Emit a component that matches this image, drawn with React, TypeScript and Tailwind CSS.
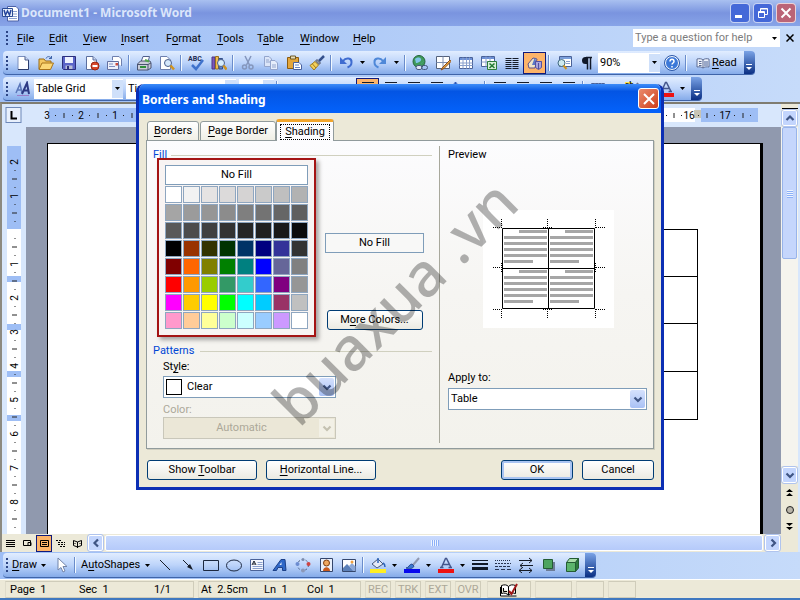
import type { ReactNode } from "react";

const Svg = ({ children, w = 16 }: { children: ReactNode; w?: number }) => (
  <svg width={w} height="16" viewBox={`0 0 ${w} 16`} fill="none" aria-hidden="true">
    {children}
  </svg>
);

const page = "M3 1.5h7l3.500 3.500v9.500H3z";

const icons: Record<string, ReactNode> = {
  newDoc: (
    <Svg>
      <path d={page} fill="#fff" stroke="#7a8fbf" />
      <path d="M13.500 5v9.500H3" stroke="#2c3c6c" />
      <path d="M10 1.500V5h3.500" fill="#c9d6f2" stroke="#4a5c8c" />
    </Svg>
  ),
  open: (
    <Svg>
      <path d="M1 14V4h5l1.500 2H13v3" fill="#f4c860" stroke="#9a6b14" />
      <path d="M1 14.500 4 8h11.500l-3 6.500z" fill="#fbd876" stroke="#a8741a" />
      <path d="M8 3.500c1-2.500 4-2.500 5.500 0m0 0V1m0 2.500H11" stroke="#3c62a8" />
    </Svg>
  ),
  save: (
    <Svg>
      <path d="M1.500 1.500h13v13h-12l-1-1z" fill="#5a64c8" stroke="#2c2f7c" />
      <path d="M4 2h8v6H4z" fill="#eef2ff" />
      <path d="M4.500 10.500h7V14h-7z" fill="#b9bfd6" />
      <path d="M6 11h2v3H6z" fill="#2c2f7c" />
    </Svg>
  ),
  permission: (
    <Svg>
      <path d="M2.500 1.500H9l3.500 3.500v9.500h-10z" fill="#fff" stroke="#5b6f9f" />
      <path d="M9 1.500V5h3.500" fill="#c9d6f2" stroke="#5b6f9f" />
      <circle cx="11" cy="11" r="4" fill="#d8482c" stroke="#9a2410" />
      <path d="M8.500 11h5" stroke="#fff" strokeWidth="2" />
    </Svg>
  ),
  mail: (
    <Svg>
      <path d="M5.500 5V1.500H12l2.500 2.500v7" fill="#fff" stroke="#6d7fae" />
      <path d="M.500 6.500h11v8H.500z" fill="#eef1fb" stroke="#6470a0" />
      <path d="M2 9h4M2 11.500h6" stroke="#7f8fc0" />
      <path d="M8.500 8H11v2.500H8.500z" fill="#cc4a3c" />
    </Svg>
  ),
  print: (
    <Svg>
      <path d="M5 7 7 1.500h6.500L12 7" fill="#fff" stroke="#50608c" />
      <path d="m1.500 9 3-3H14l1 2v5l-3 2H1.500z" fill="#c9cdd8" stroke="#4a5370" />
      <path d="M1.500 9.500h10.500L15 8M12 9.500V15" stroke="#4a5370" />
      <path d="M4 12h6" stroke="#2f8f3a" strokeWidth="2" />
      <path d="m9 5 4 1.500" stroke="#54a84c" strokeWidth="2" />
    </Svg>
  ),
  preview: (
    <Svg>
      <path d="M1.500 1.500H8l3.500 3.500v9.500h-10z" fill="#fff" stroke="#6d7fae" />
      <circle cx="9" cy="8" r="3.500" fill="#d6e8fb" stroke="#4a5f8c" />
      <path d="m11.500 10.500 3.500 4" stroke="#d09420" strokeWidth="2.500" />
    </Svg>
  ),
  spelling: (
    <Svg w={18}>
      <text x="1" y="6" fontSize="7" fontWeight="bold" fill="#1c2c54">ABC</text>
      <path d="m5 10 4 4 7-9" stroke="#3f72cc" strokeWidth="2.500" />
    </Svg>
  ),
  research: (
    <Svg>
      <path d="M1 2h3v12H1z" fill="#7c58b8" stroke="#4b3488" />
      <path d="M4.500 1.500h3V14h-3z" fill="#f0bc50" stroke="#98701c" />
      <path d="M8 3.500h3.500V14H8z" fill="#5c86d0" stroke="#34508c" />
      <circle cx="10" cy="8" r="3.500" fill="#d6ecfb" stroke="#4a5f8c" />
      <path d="m12.500 10.500 3 4" stroke="#d09420" strokeWidth="2.500" />
    </Svg>
  ),
  cut: (
    <Svg>
      <path d="m5 1 4.500 9M11 1l-4.500 9" stroke="#8496bc" strokeWidth="1.500" />
      <circle cx="4.500" cy="12" r="2" stroke="#8496bc" strokeWidth="1.500" />
      <circle cx="11" cy="12" r="2" stroke="#8496bc" strokeWidth="1.500" />
    </Svg>
  ),
  copy: (
    <Svg>
      <path d="M1.500 1.500H6L8.500 4v7.500h-7z" fill="#dbe5f8" stroke="#93a5cc" />
      <path d="M7.500 5.500H12l2.500 2.500v6.500h-7z" fill="#e6eefb" stroke="#93a5cc" />
      <path d="M3 5h3M3 7h4M9 10h4M9 12h4" stroke="#93a5cc" />
    </Svg>
  ),
  paste: (
    <Svg>
      <path d="M1.500 2.500h11v11h-11z" fill="#e4a63c" stroke="#8c5c10" />
      <path d="M4.500 1h5v3h-5z" fill="#e8dcb8" stroke="#6c5a28" />
      <path d="M7.500 7.500H13L15.500 10v4.500h-8z" fill="#fff" stroke="#4a62a0" />
      <path d="M9 10h4M9 12.500h5" stroke="#6a85c4" />
    </Svg>
  ),
  painter: (
    <Svg>
      <path d="m15 1-5 5" stroke="#34508c" strokeWidth="2.500" />
      <path d="M8 4.500 11.500 8l-1.500 1.500L6.500 6z" fill="#9098a8" stroke="#505870" />
      <path d="M6 6.500 9.500 10 5 15l-4-4.500z" fill="#f3d05c" stroke="#a07c1c" />
      <path d="m3.500 9 3.500 4" stroke="#a07c1c" />
    </Svg>
  ),
  undo: (
    <Svg>
      <path d="M5 6c3-4 9-3 8.500 1.500 0 2.500-1.500 4-4 5" stroke="#3f6cd0" strokeWidth="2" />
      <path d="M2 2v7h7z" fill="#3f6cd0" />
    </Svg>
  ),
  redo: (
    <Svg>
      <path d="M11 6C8 2 2 3 2.500 7.500c0 2.500 1.500 4 4 5" stroke="#4f88d8" strokeWidth="2" />
      <path d="M14 2v7H7z" fill="#4f88d8" />
    </Svg>
  ),
  hyperlink: (
    <Svg>
      <circle cx="7" cy="6.500" r="6" fill="#3f9a5c" stroke="#24643c" />
      <path d="M3 4c2-2 5-2 6 0S6 8 4 8M9 9c1-2 3-2 3-3" fill="#7fc4e8" />
      <rect x="4" y="10.500" width="6" height="4" rx="2" fill="#dfe6f4" stroke="#46587c" />
      <rect x="9.500" y="10.500" width="6" height="4" rx="2" stroke="#46587c" />
    </Svg>
  ),
  borders: (
    <Svg>
      <path d="M1.500 1.500h13v12h-13z" fill="#fff" stroke="#54627c" />
      <path d="M1.500 7.500h13M8 1.500v12" stroke="#8090b0" />
      <path d="m15 5-7 7-2 3 3-1.500 7-7z" fill="#e8a840" stroke="#8c4c1c" />
    </Svg>
  ),
  table: (
    <Svg>
      <path d="M1.500 2.500h13v11h-13z" fill="#fff" stroke="#4a6298" />
      <path d="M2 3h12v2H2z" fill="#6c90d8" />
      <path d="M1.500 8h13M1.500 10.500h13M5 2.500v11M8.500 2.500v11M11.500 2.500v11" stroke="#8aa0cc" />
    </Svg>
  ),
  excel: (
    <Svg>
      <path d="M.500 1.500h13v10H.500z" fill="#fff" stroke="#4a6298" />
      <path d="M1 2h12v2H1z" fill="#6c90d8" />
      <path d="M.500 7h13M5 1.500v10M9 1.500v10" stroke="#8aa0cc" />
      <path d="M6.500 6.500h9v8h-9z" fill="#d8efd8" stroke="#2c7c3c" />
      <path d="m8.500 8.500 5 4.500m0-4.500-5 4.500" stroke="#1f7a30" strokeWidth="1.500" />
    </Svg>
  ),
  columns: (
    <Svg>
      <path d="M1.500 3.500h6m1 0h6m-13 2h6m1 0h6m-13 2h6m1 0h6m-13 2h6m1 0h6m-13 2h6m1 0h6m-13 2h6m1 0h6" stroke="#161c28" />
    </Svg>
  ),
  drawing: (
    <Svg>
      <path d="M1 9 6 3l4 1-2 9H2z" fill="#f0e6c8" stroke="#605088" />
      <path d="M5 10 8 2l2 8z" fill="#5a78c8" />
      <path d="M8.500 6.500h6v6l-3 2-3-2z" fill="#a8a4dc" stroke="#5450a0" />
      <path d="M8.500 6.500h6M11.500 8v6" stroke="#5450a0" />
    </Svg>
  ),
  docMap: (
    <Svg>
      <path d="M3.500 1.500h12v10h-12z" fill="#fff" stroke="#4a6298" />
      <path d="M4 2h11v2H4z" fill="#7ba0dc" />
      <path d="M10 6.500h4m-4 2h4" stroke="#8aa0cc" />
      <circle cx="5.500" cy="8" r="3.500" fill="#cfeaf0" stroke="#3f6880" />
      <path d="m7.500 10.500 3 3.500" stroke="#d09420" strokeWidth="2" />
    </Svg>
  ),
  pilcrow: (
    <Svg>
      <path d="M8.500 2.500v12m3-12v12M13 2.500H7" stroke="#101828" strokeWidth="1.500" />
      <path d="M8.500 2h-2a3.500 3.500 0 0 0 0 7h2z" fill="#101828" />
    </Svg>
  ),
  help: (
    <Svg>
      <circle cx="8" cy="8" r="6.500" fill="#3c78d8" stroke="#fff" />
      <circle cx="8" cy="8" r="7.500" stroke="#2c58a8" />
      <path d="M6 6.500c0-3 4-3 4 0C10 8 8 8 8 9.500M8 11v1.500" stroke="#fff" strokeWidth="1.500" />
    </Svg>
  ),
  book: (
    <Svg>
      <path d="M2 4c2.500-.500 4.500-.500 6 1 1.500-1.500 3.500-1.500 6-1v8c-2.500-.500-4.500 0-6 1-1.500-1-3.500-1.500-6-1z" fill="#eef2fb" stroke="#5c6c94" />
      <path d="M8 5v8M4 6.500h2.500M4 8.500h2.500M4 10.500h2.500" stroke="#5c6c94" />
      <path d="M9 6h4v5.500H9z" fill="#9aa8c8" />
    </Svg>
  ),
  styles: (
    <Svg>
      <path d="m1 12 4-9 2 9M2.500 9H7" stroke="#5a76b8" strokeWidth="1.500" />
      <path d="m7 13 5-11 2 11M8.500 9.500H14" stroke="#2c3a84" strokeWidth="2" />
      <path d="M2 14.500h12" stroke="#9a7cc8" />
    </Svg>
  ),
  alignLines: (
    <Svg>
      <path d="M2 1.500h12M2 4.500h8M2 7.500h12M2 10.500h8M2 13.500h12" stroke="#161c28" />
    </Svg>
  ),
  spacing: (
    <Svg>
      <path d="M3.500 1v14M1 4l2.500-3L6 4M1 12l2.500 3L6 12" stroke="#2c58b8" />
      <path d="M8 4.500h7m-7 4h7m-7 4h7" stroke="#161c28" />
    </Svg>
  ),
  marker: (
    <Svg>
      <path d="M1 1h7v6H1z" fill="#ffe94a" />
      <text x="1" y="6" fontSize="8" fontWeight="bold" fill="#161c28">ab</text>
      <path d="m14 2-6 8" stroke="#6a7694" strokeWidth="2" />
    </Svg>
  ),
  fontColor: (
    <Svg>
      <path d="m3.500 10.500 4-9h1l4.500 9M5 7.500h6M2 10.500h3.500m5 0H14" stroke="#44568c" strokeWidth="1.500" />
      <path d="M0 12h16v4H0z" fill="#ee1111" />
    </Svg>
  ),
  cursor: (
    <Svg>
      <path d="M5 1v12l3-2.500L10 15l2-1-2-4.500h4z" fill="#fff" stroke="#7384a8" />
    </Svg>
  ),
  line: (
    <Svg>
      <path d="m3 3 10 10" stroke="#161c28" />
    </Svg>
  ),
  arrow: (
    <Svg>
      <path d="m3 3 8 8" stroke="#161c28" />
      <path d="m13 13-6-3 3-3z" fill="#161c28" />
    </Svg>
  ),
  rect: (
    <Svg>
      <path d="M.500 3.500h15v10H.500z" stroke="#1c2840" />
    </Svg>
  ),
  ellipse: (
    <Svg>
      <ellipse cx="8" cy="8.500" rx="7.500" ry="5.500" stroke="#1c2840" />
    </Svg>
  ),
  textBox: (
    <Svg>
      <path d="M1.500 2.500h13v11h-13z" fill="#f4f7fd" stroke="#4a6298" />
      <path d="m3 8 2-4 2 4M4 7h2" stroke="#161c28" />
      <path d="M8.500 5.500h5m-5 2h5m-10 2h10m-10 2h10" stroke="#8aa0cc" />
    </Svg>
  ),
  wordArt: (
    <Svg>
      <path d="m1 13.500 8-11h4l1 11h-3.500v-3H6l-1.500 3z" fill="#2f68c8" stroke="#1c4088" />
      <path d="m7.500 8 2-3v3z" fill="#e8f0fc" />
    </Svg>
  ),
  diagram: (
    <Svg>
      <circle cx="8" cy="8" r="5.500" stroke="#4a5c80" strokeDasharray="2 2" />
      <circle cx="8" cy="2.500" r="1.500" fill="#7c8cac" />
      <circle cx="13.500" cy="7" r="2" fill="#cc4444" />
      <circle cx="2.500" cy="7" r="2" fill="#6c8cd0" />
      <circle cx="8" cy="13.500" r="2" fill="#8c98b8" />
    </Svg>
  ),
  clipArt: (
    <Svg>
      <path d="M2.500 1.500h12v13h-12z" fill="#e8effb" stroke="#34466c" />
      <circle cx="8.500" cy="6" r="3" fill="#f0a860" stroke="#7c3c10" />
      <path d="M5 14c0-5 7-5 7 0z" fill="#c8581c" />
    </Svg>
  ),
  picture: (
    <Svg>
      <path d="M1.500 2.500h13v12h-13z" fill="#fff" stroke="#34466c" />
      <path d="M2 14v-3l4-4 7 7z" fill="#5c80b8" />
      <path d="m8 9 3-3 3.500 3.500V14H12z" fill="#8ca8d8" />
      <circle cx="11" cy="5" r="1.500" fill="#f0a040" />
    </Svg>
  ),
  fill: (
    <Svg>
      <path d="m2 7 6-5 5 5-6 4z" fill="#e4eaf8" stroke="#44587c" />
      <path d="M8 6V1M13 6c2 1 2 3 2 4" stroke="#2c64b8" strokeWidth="1.500" />
      <path d="M0 12h16v4H0z" fill="#ffee22" />
    </Svg>
  ),
  brush: (
    <Svg>
      <path d="m15 1-6 7" stroke="#9098b0" strokeWidth="2" />
      <path d="M2 11c3 0 3-4 6-4l2 2c-1 3-5 3-8 2z" fill="#3c78d0" stroke="#2c4c94" />
      <path d="M0 12h16v4H0z" fill="#0808ee" />
    </Svg>
  ),
  lineStyle: (
    <Svg>
      <path d="M0 3.500h16" stroke="#101828" />
      <path d="M0 7h16" stroke="#101828" strokeWidth="2" />
      <path d="M0 11.500h16" stroke="#101828" strokeWidth="3" />
    </Svg>
  ),
  dashStyle: (
    <Svg>
      <path d="M0 3.500h16" stroke="#283450" strokeDasharray="1 1" />
      <path d="M0 6.500h16" stroke="#283450" strokeDasharray="2 1" />
      <path d="M0 9.500h16" stroke="#283450" strokeDasharray="3 1" />
      <path d="M0 12.500h16" stroke="#283450" strokeDasharray="4 2" />
    </Svg>
  ),
  arrowStyle: (
    <Svg>
      <path d="M1 3.500h13M2 8.500h13M1 13.500h13M11 1l3 2.500L11 6M5 6 2 8.500 5 11M11 11l3 2.500-3 2.500M4 11l-3 2.500L4 16" stroke="#161c28" />
    </Svg>
  ),
  shadow: (
    <Svg>
      <path d="M5 5h9v9H5z" fill="#6c7c98" />
      <path d="M2.500 2.500h9v9h-9z" fill="#4ca460" stroke="#245c34" />
    </Svg>
  ),
  cube: (
    <Svg>
      <path d="M2.500 5.500h9v9h-9z" fill="#5cb46c" stroke="#245c34" />
      <path d="m2.500 5.500 3-4h9l-3 4z" fill="#a8dca8" stroke="#245c34" />
      <path d="m11.500 5.500 3-4V11l-3 3.500z" fill="#2c7c3c" stroke="#245c34" />
    </Svg>
  ),
};

const Tool = ({ icon, label, on }: { icon: string; label: string; on?: boolean }) => (
  <button
    type="button"
    aria-label={label}
    className={
      on
        ? "flex h-[22px] w-[23px] shrink-0 items-center justify-center border border-[#101a7c] bg-[#fdb469]"
        : "flex h-[22px] w-[23px] shrink-0 items-center justify-center"
    }
  >
    {icons[icon]}
  </button>
);

const Caret = ({ label }: { label: string }) => (
  <button type="button" aria-label={label} className="flex h-[22px] w-[11px] shrink-0 items-center justify-center">
    <svg width="5" height="3" viewBox="0 0 5 3" aria-hidden="true">
      <path d="M0 0h5L2.500 3z" fill="#000" />
    </svg>
  </button>
);

const Sep = () => (
  <span className="flex w-[6px] shrink-0 justify-center">
    <span className="h-4 w-px bg-[#6a8ccb]" />
    <span className="h-4 w-px bg-[#f1f9ff]" />
  </span>
);

const Grip = () => (
  <span className="flex w-2 shrink-0 flex-col items-center gap-0.5">
    {[0, 1, 2, 3].map((i) => (
      <span key={i} className="h-0.5 w-0.5 bg-[#2c4585]" />
    ))}
  </span>
);

const EndCap = () => (
  <button
    type="button"
    aria-label="Toolbar options"
    className="flex w-[11px] shrink-0 flex-col items-center justify-end gap-0.5 self-stretch rounded-r bg-linear-to-b from-[#7ba3e6] to-[#0b2f84] pb-1"
  >
    <span className="h-px w-[6px] bg-white" />
    <svg width="6" height="3" viewBox="0 0 6 3" aria-hidden="true">
      <path d="M0 0h6L3 3z" fill="#fff" />
    </svg>
  </button>
);

const ToolCombo = ({ label, value, width }: { label: string; value: string; width: string }) => (
  <span className={`flex h-5 shrink-0 items-center bg-white ${width}`}>
    <select aria-label={label} className="min-w-0 flex-1 appearance-none bg-white pl-0.5 outline-none">
      <option>{value}</option>
    </select>
    <span className="pointer-events-none flex h-[18px] w-[11px] items-center justify-center bg-[#cfe0fa]">
      <svg width="5" height="3" viewBox="0 0 5 3" aria-hidden="true">
        <path d="M0 0h5L2.500 3z" fill="#000" />
      </svg>
    </span>
  </span>
);

const Key = ({ text, at }: { text: string; at: number }) => (
  <>
    {text.slice(0, at)}
    <span className="underline underline-offset-2">{text[at]}</span>
    {text.slice(at + 1)}
  </>
);

const Chevron = ({ dir = "down", off }: { dir?: "up" | "down" | "left" | "right"; off?: boolean }) => {
  const d = {
    up: "M1.500 7 5 3.500 8.500 7",
    down: "M1.500 3.500 5 7l3.500-3.500",
    left: "M7 1.500 3.500 5 7 8.500",
    right: "M3.500 1.500 7 5 3.500 8.500",
  };
  return (
    <svg width="10" height="10" viewBox="0 0 10 10" fill="none" aria-hidden="true">
      <path d={d[dir]} stroke={off ? "#c4c1b0" : "#3f5584"} strokeWidth="2.200" />
    </svg>
  );
};

const TitleBar = () => (
  <header className="flex h-[26px] shrink-0 items-center bg-linear-to-b from-[#a9c0f0] via-[#7a94df] to-[#88a4e8] pl-0.5 pr-1">
    <svg width="17" height="17" viewBox="0 0 17 17" fill="none" aria-hidden="true">
      <path d="M5.500 1.500H14l2.500 2.500v12H5.500z" fill="#fff" stroke="#4c62a8" />
      <path d="M9 6.500h6M9 9h6m-8 2.500h8m-8 2h8" stroke="#8ca0d0" />
      <path d="M.500 3.500h10v8H.500z" fill="#e8effc" stroke="#2c4c94" />
      <path d="m2 5 1.500 5 2-4 2 4L9 5" stroke="#24449c" strokeWidth="1.500" />
    </svg>
    <h1 className="ml-0.5 flex-1 font-['Noto_Sans',sans-serif] text-[12px] font-bold text-[#dbe6fb]">
      Document1 - Microsoft Word
    </h1>
    <div className="flex gap-[3px]">
      <button type="button" aria-label="Minimize" className="flex h-5 w-5 items-end rounded-sm border border-white/70 bg-[#4468d8] p-1">
        <span className="h-[3px] w-[7px] bg-white" />
      </button>
      <button type="button" aria-label="Restore" className="flex h-5 w-5 items-center justify-center rounded-sm border border-white/70 bg-[#4468d8]">
        <svg width="12" height="12" viewBox="0 0 12 12" fill="none" stroke="#fff" aria-hidden="true">
          <path d="M3.500 4V1.500h7v6H8M3.500 2h7M1.500 4.500h6v6h-6zM1.500 5.500h6" />
        </svg>
      </button>
      <button type="button" aria-label="Close" className="flex h-5 w-5 items-center justify-center rounded-sm border border-white/70 bg-[#bb6477]">
        <svg width="12" height="12" viewBox="0 0 12 12" stroke="#fff" strokeWidth="2" aria-hidden="true">
          <path d="m1.500 1.500 9 9m0-9-9 9" />
        </svg>
      </button>
    </div>
  </header>
);

const menus = [
  { text: "File", at: 0, w: "w-[32px]" },
  { text: "Edit", at: 0, w: "w-[34px]" },
  { text: "View", at: 0, w: "w-[38px]" },
  { text: "Insert", at: 0, w: "w-[45px]" },
  { text: "Format", at: 1, w: "w-[51px]" },
  { text: "Tools", at: 0, w: "w-[40px]" },
  { text: "Table", at: 1, w: "w-[43px]" },
  { text: "Window", at: 0, w: "w-[53px]" },
  { text: "Help", at: 0, w: "w-[38px]" },
];

const MenuBar = () => (
  <nav className="flex h-6 shrink-0 items-center pl-[3px] pr-1">
    <Grip />
    <div className="flex flex-1 pt-px">
      {menus.map((m) => (
        <button key={m.text} type="button" className={`pl-1.5 text-left ${m.w}`}>
          <Key text={m.text} at={m.at} />
        </button>
      ))}
    </div>
    <div className="flex h-[18px] w-[147px] items-center bg-white">
      <input aria-label="Help question" placeholder="Type a question for help" className="min-w-0 flex-1 pl-0.5 placeholder:text-[#7c7c7c]" />
      <Caret label="Recent questions" />
    </div>
    <button type="button" aria-label="Close document" className="ml-1 flex h-4 w-3 items-center justify-center">
      <svg width="8" height="8" viewBox="0 0 8 8" stroke="#000" strokeWidth="1.500" aria-hidden="true">
        <path d="m.500.500 7 7m0-7-7 7" />
      </svg>
    </button>
  </nav>
);

const bar = "flex items-center border-b border-[#3f64a8] bg-linear-to-b from-[#e1edff] via-[#bdd4fa] to-[#85abe9]";

const StandardToolbar = () => (
  <div className="flex h-[26px] shrink-0 pb-px pl-[3px] pt-px">
    <div className={`${bar} rounded`}>
      <Grip />
      <div className="flex items-center">
        <Tool icon="newDoc" label="New" />
        <Tool icon="open" label="Open" />
        <Tool icon="save" label="Save" />
        <Tool icon="permission" label="Permission" />
        <Tool icon="mail" label="E-mail" />
        <Sep />
        <Tool icon="print" label="Print" />
        <Tool icon="preview" label="Print Preview" />
        <Sep />
        <Tool icon="spelling" label="Spelling" />
        <Tool icon="research" label="Research" />
        <Sep />
        <Tool icon="cut" label="Cut" />
        <Tool icon="copy" label="Copy" />
        <Tool icon="paste" label="Paste" />
        <Tool icon="painter" label="Format Painter" />
        <Sep />
        <Tool icon="undo" label="Undo" />
        <Caret label="Undo list" />
        <Tool icon="redo" label="Redo" />
        <Caret label="Redo list" />
        <Sep />
        <Tool icon="hyperlink" label="Hyperlink" />
        <Tool icon="borders" label="Tables and Borders" />
        <Tool icon="table" label="Insert Table" />
        <Tool icon="excel" label="Insert Worksheet" />
        <Tool icon="columns" label="Columns" />
        <Tool icon="drawing" label="Drawing" on />
        <Sep />
        <Tool icon="docMap" label="Document Map" />
        <Tool icon="pilcrow" label="Show marks" />
      </div>
      <ToolCombo label="Zoom" value="90%" width="w-[62px]" />
      <Tool icon="help" label="Help" />
      <Sep />
      <button type="button" className="mr-[7px] flex items-center gap-px pl-1.5">
        {icons.book}
        <span>
          <Key text="Read" at={0} />
        </span>
      </button>
      <EndCap />
    </div>
  </div>
);

const FormatToolbar = () => (
  <div className="flex h-[26px] shrink-0 pb-px pl-[3px] pt-px">
    <div className={`${bar} rounded`}>
      <Grip />
      <Tool icon="styles" label="Styles and Formatting" />
      <div className="flex items-center gap-[3px]">
        <ToolCombo label="Style" value="Table Grid" width="w-[89px]" />
        <ToolCombo label="Font" value="Times New Roman" width="w-[110px]" />
        <ToolCombo label="Font size" value="12" width="w-[35px]" />
      </div>
      <Sep />
      <div className="flex w-[76px] justify-around">
        <button type="button" className="font-bold">B</button>
        <button type="button" className="italic">I</button>
        <button type="button" className="underline">U</button>
      </div>
      <Tool icon="alignLines" label="Align Left" on />
      <Tool icon="alignLines" label="Center" />
      <Tool icon="alignLines" label="Align Right" />
      <Tool icon="alignLines" label="Justify" />
      <Tool icon="spacing" label="Line Spacing" />
      <Caret label="Line spacing list" />
      <Sep />
      <Tool icon="alignLines" label="Numbering" />
      <Tool icon="alignLines" label="Bullets" />
      <Tool icon="alignLines" label="Decrease Indent" />
      <Tool icon="alignLines" label="Increase Indent" />
      <Sep />
      <Tool icon="table" label="Outside Border" />
      <Caret label="Border list" />
      <Tool icon="marker" label="Highlight" />
      <Caret label="Highlight list" />
      <Tool icon="fontColor" label="Font Color" />
      <Caret label="Font color list" />
      <span className="w-[3px]" />
      <EndCap />
    </div>
  </div>
);

// One centimetre takes 34 pixels on both rulers.
const CM = 34;

const TopRuler = () => (
  <svg width="760" height="23" className="block font-[Roboto,sans-serif] text-[10px]" aria-label="Horizontal ruler">
    <rect x="4" y="3.500" width="15" height="15" fill="#e8f0fc" stroke="#6d88b8" />
    <path d="M9.500 7v7.500H15" stroke="#000" strokeWidth="2" fill="none" />
    <rect x="47" y="4" width="103" height="14" fill="#9ebef5" />
    <rect x="150" y="4" width="543" height="14" fill="#fff" />
    <rect x="699" y="4" width="57" height="14" fill="#9ebef5" />
    <rect x="692" y="6" width="7" height="8" fill="#c8c4b4" />
    {[3, 2, 1].map((n, i) => (
      <g key={n} transform={`translate(${45 + i * CM} 0)`}>
        <text x="0" y="15" textAnchor="middle">{n}</text>
        <path d="M8 11.500h1m8-2.500v5m8-2.500h1" stroke="#222" />
      </g>
    ))}
    {[16, 17].map((n, i) => (
      <g key={n} transform={`translate(${687 + i * 36} 0)`}>
        <text x="0" y="15" textAnchor="middle">{n}</text>
        <path d="M9 11.500h1m8-2.500v5m7-2.500h1" stroke="#222" />
      </g>
    ))}
    <path d="M664 11.500h1m7-2.500v5m7-2.500h1" stroke="#222" />
  </svg>
);

const SideRuler = () => (
  <svg width="24" height="407" className="block shrink-0 font-[Roboto,sans-serif] text-[10px]" aria-label="Vertical ruler">
    <rect x="5" y="19" width="14" height="388" fill="#fff" />
    <rect x="5" y="19" width="14" height="83" fill="#9ebef5" />
    {[149, 197, 244, 288].map((y) => (
      <rect key={y} x="5" y={y} width="14" height="6" fill="#9ebef5" />
    ))}
    {[2, 1, 0, 1, 2, 3, 4, 5, 6, 7, 8].map((n, i) => (
      <g key={i} transform={`translate(12 ${35 + i * CM})`}>
        {n > 0 && (
          <text x="0" y="4" textAnchor="middle" transform="rotate(-90)">{n}</text>
        )}
        <path d="M1 8v1m-3 8h5M1 25v1" stroke="#222" />
      </g>
    ))}
  </svg>
);

const ScrollButton = ({ dir }: { dir: "up" | "down" | "left" | "right" }) => (
  <button
    type="button"
    aria-label={`Scroll ${dir}`}
    className="flex h-4 w-[15px] shrink-0 items-center justify-center rounded-xs border border-white bg-[#c3d5fd] outline outline-[#b0c4ee]"
  >
    <Chevron dir={dir} />
  </button>
);

const VerticalScroll = () => (
  <div className="flex w-[17px] shrink-0 flex-col items-center gap-px bg-[#ece9d8]">
    <span className="h-[5px] w-4 border-b border-black bg-[#ece9d8]" />
    <ScrollButton dir="up" />
    <div className="w-full flex-1 bg-[#f5f4ee] px-px">
      <div className="flex h-[132px] w-[15px] flex-col items-center justify-center gap-px rounded-xs border border-[#98b4ea] bg-[#c5d6fc]">
        {[0, 1, 2, 3].map((i) => (
          <span key={i} className="h-px w-1.5 bg-[#eef4fe] shadow-[0_1px_0_#8cb0f8]" />
        ))}
      </div>
    </div>
    <ScrollButton dir="down" />
    <div className="flex h-[68px] flex-col items-center gap-[9px] pt-[5px]">
      <svg width="7" height="8" viewBox="0 0 7 8" aria-hidden="true">
        <path d="M3.500 0 7 3H0zM3.500 4 7 7H0z" />
      </svg>
      <svg width="8" height="8" viewBox="0 0 8 8" aria-hidden="true">
        <circle cx="4" cy="4" r="3.500" fill="#b8b4a8" stroke="#222" />
      </svg>
      <svg width="7" height="8" viewBox="0 0 7 8" aria-hidden="true">
        <path d="M0 0h7L3.500 3zM0 4h7L3.500 7z" />
      </svg>
    </div>
  </div>
);

const HorizontalScroll = () => (
  <div className="flex h-[18px] shrink-0 items-center gap-0.5 bg-[#ece9d8] pr-px">
    <div className="flex w-[84px] items-center">
      {["Normal", "Web", "Print", "Outline", "Reading"].map((v) => (
        <button
          key={v}
          type="button"
          aria-label={`${v} view`}
          className={
            v === "Print"
              ? "flex h-[17px] w-[17px] items-center justify-center border border-[#101a7c] bg-[#fdb469]"
              : "flex h-[17px] w-[17px] items-center justify-center"
          }
        >
          <svg width="9" height="9" viewBox="0 0 9 9" fill="none" stroke="#000" aria-hidden="true">
            {v === "Normal" && <path d="M0 1.500h9m-9 2h9m-9 2h9m-9 2h9" />}
            {v === "Web" && <path d="M.500 1.500h7v5h-7zM5 3.500h3v3H5z" />}
            {v === "Print" && <path d="M.500 1.500h8v6h-8zM2 3.500h5m-5 2h5" />}
            {v === "Outline" && <path d="M0 1.500h5m-3 2h7m-7 2h7m-5 2h5" strokeDasharray="2 1" />}
            {v === "Reading" && <path d="M.500 1.500 4.500 3l4-1.500v5L4.500 8l-4-1.500zM4.500 3v6M2 4v1m5-1v1" />}
          </svg>
        </button>
      ))}
    </div>
    <ScrollButton dir="left" />
    <div className="flex h-4 flex-1 items-center justify-center gap-px rounded-xs border border-white bg-linear-to-b from-[#c9dafd] to-[#b5cafa]">
      {[0, 1, 2, 3].map((i) => (
        <span key={i} className="h-1.5 w-px bg-[#eef4fe] shadow-[1px_0_0_#8cb0f8]" />
      ))}
    </div>
    <ScrollButton dir="right" />
  </div>
);

const Workspace = () => (
  <main className="flex min-h-0 flex-1 border-l-2 border-t-2 border-t-[#7f7c70] border-l-[#8c8a80] bg-[#d8e7fc] pr-0.5">
    <div className="flex min-w-0 flex-1 flex-col">
      <div className="h-[23px] shrink-0 overflow-hidden">
        <TopRuler />
      </div>
      <div className="flex min-h-0 flex-1 overflow-hidden">
        <SideRuler />
        <div className="flex-1 bg-[#9099ae] pl-[21px] pr-[18px] pt-4">
          <div className="h-full border-l border-r-3 border-t border-black bg-white pl-[102px] pr-[62px] pt-[85px]">
            <table className="w-full border-collapse">
              <tbody>
                {[0, 1].map((r) => (
                  <tr key={r} className="h-[47px]">
                    <td className="border border-black" />
                    <td className="border border-black" />
                  </tr>
                ))}
                {[2, 3].map((r) => (
                  <tr key={r} className="h-[48px]">
                    <td className="border border-black" />
                    <td className="border border-black" />
                  </tr>
                ))}
              </tbody>
            </table>
          </div>
        </div>
      </div>
      <HorizontalScroll />
    </div>
    <VerticalScroll />
  </main>
);

const DrawToolbar = () => (
  <div className="flex h-[28px] shrink-0 border-b border-white pb-px pl-[3px] pt-px">
    <div className={`${bar} rounded`}>
      <Grip />
      <button type="button" className="flex w-[27px] pl-px">
        <Key text="Draw" at={0} />
      </button>
      <Caret label="Draw menu" />
      <Tool icon="cursor" label="Select Objects" />
      <Sep />
      <button type="button" className="w-[64px] pl-[3px] text-left">
        <Key text="AutoShapes" at={1} />
      </button>
      <Caret label="AutoShapes menu" />
      <Tool icon="line" label="Line" />
      <Tool icon="arrow" label="Arrow" />
      <Tool icon="rect" label="Rectangle" />
      <Tool icon="ellipse" label="Oval" />
      <Tool icon="textBox" label="Text Box" />
      <Tool icon="wordArt" label="WordArt" />
      <Tool icon="diagram" label="Diagram" />
      <Tool icon="clipArt" label="Clip Art" />
      <Tool icon="picture" label="Picture" />
      <Sep />
      <Tool icon="fill" label="Fill Color" />
      <Caret label="Fill list" />
      <Tool icon="brush" label="Line Color" />
      <Caret label="Line color list" />
      <Tool icon="fontColor" label="Text Color" />
      <Caret label="Text color list" />
      <Tool icon="lineStyle" label="Line Style" />
      <Tool icon="dashStyle" label="Dash Style" />
      <Tool icon="arrowStyle" label="Arrow Style" />
      <Tool icon="shadow" label="Shadow Style" />
      <Tool icon="cube" label="3-D Style" />
      <span className="w-0.5" />
      <EndCap />
    </div>
  </div>
);

const cell = "border border-[#cfccba] border-l-[#dedbcb]";

const StatusBar = () => (
  <footer className="flex h-5 shrink-0 items-stretch gap-1 border-b-2 border-[#3f78c0] bg-[#ece9d8] pl-[5px] pt-px">
    <div className={`flex w-[189px] items-center pl-1 ${cell}`}>
      <span className="w-[69px]">Page&nbsp; 1</span>
      <span className="w-[75px]">Sec&nbsp; 1</span>
      <span>1/1</span>
    </div>
    <div className={`flex w-[163px] items-center pl-0.5 ${cell}`}>
      <span className="w-[63px]">At&nbsp; 2.5cm</span>
      <span className="w-[43px]">Ln&nbsp; 1</span>
      <span>Col&nbsp; 1</span>
    </div>
    {["REC", "TRK", "EXT", "OVR"].map((t) => (
      <span key={t} className={`flex w-[26px] items-center justify-center text-[#aca899] ${cell}`}>
        {t}
      </span>
    ))}
    <div className={`ml-0.5 flex w-[44px] items-center justify-center ${cell}`}>
      <svg width="18" height="14" viewBox="0 0 18 14" fill="none" aria-label="Spelling status">
        <path d="M1.500 2.500c3-1 5-1 7 1 2-2 4-2 7-1v8c-3-1-5 0-7 1.500-2-1.500-4-2.500-7-1.500zM.500 4v9h16" fill="#fff" stroke="#000" />
        <path d="M8.500 3.500V12M3.500 5v3.500H7" stroke="#000" />
        <path d="m9 8 2.500 3L17 1" stroke="#a01818" strokeWidth="2" />
      </svg>
    </div>
    <div className={`w-[37px] ${cell}`} />
    <div className={`w-[28px] ${cell}`} />
    <div className={`w-[28px] ${cell}`} />
  </footer>
);

const swatches = [
  "#ffffff", "#f2f2f2", "#e5e3e3", "#dcdada", "#d5d3d3", "#cacaca", "#bfbfbf", "#b2b2b2",
  "#a5a5a5", "#9b9b9b", "#969696", "#8c8c8c", "#7f7f7f", "#737373", "#666666", "#5f5f5f",
  "#595959", "#4c4c4c", "#404040", "#333333", "#262626", "#202020", "#191919", "#0c0c0c",
  "#000000", "#993300", "#333300", "#003300", "#003366", "#000080", "#333399", "#333333",
  "#800000", "#ff6600", "#808000", "#008000", "#008080", "#0000ff", "#666699", "#808080",
  "#ff0000", "#ff9900", "#99cc00", "#339966", "#33cccc", "#3366ff", "#800080", "#969696",
  "#ff00ff", "#ffcc00", "#ffff00", "#00ff00", "#00ffff", "#00ccff", "#993366", "#c0c0c0",
  "#ff99cc", "#ffcc99", "#ffff99", "#ccffcc", "#ccffff", "#99ccff", "#cc99ff", "#ffffff",
];

const xpButton =
  "flex h-5 items-center justify-center rounded-[3px] border border-[#003c74] bg-linear-to-b from-white to-[#ebeae2]";

const FormSelect = ({
  id,
  value,
  disabled,
  swatch,
}: {
  id: string;
  value: string;
  disabled?: boolean;
  swatch?: boolean;
}) => (
  <div
    className={
      disabled
        ? "flex h-[22px] items-center border border-[#c9c7ba] bg-[#ebe7d7] pr-px"
        : "flex h-[22px] items-center border border-[#7f9db9] bg-white pr-px"
    }
  >
    {swatch && <span className="ml-0.5 h-4 w-4 border border-black" />}
    <select
      id={id}
      disabled={disabled}
      className={
        disabled
          ? "min-w-0 flex-1 appearance-none text-center text-[#aca899] opacity-100"
          : swatch
            ? "min-w-0 flex-1 appearance-none pl-[5px] outline-none"
            : "min-w-0 flex-1 appearance-none pl-0.5 outline-none"
      }
    >
      <option>{value}</option>
    </select>
    <span
      className={
        disabled
          ? "pointer-events-none flex h-[18px] w-[15px] items-center justify-center bg-[#f2f0e6]"
          : "pointer-events-none flex h-[18px] w-[15px] items-center justify-center rounded-xs bg-linear-to-b from-[#d5e1fd] to-[#a9c1f5]"
      }
    >
      <Chevron off={disabled} />
    </span>
  </div>
);

const PreviewTable = () => (
  <svg width="131" height="118" viewBox="0 0 131 118" className="block bg-white" role="img" aria-label="Table preview">
    {[0, 1].map((r) =>
      [0, 1].map((c) => (
        <path
          key={`${r}${c}`}
          transform={`translate(${c * 46} ${r * 40})`}
          d="M36 21.500h28M21 27.500h43M21 33.500h43M21 39.500h43M21 45.500h43M21 51.500h29"
          stroke="#a6a6a6"
          strokeWidth="3"
        />
      )),
    )}
    <path d="M19.500 18.500h92v80h-92zM65.500 18.500v80M19.500 58.500h92" fill="none" stroke="#000" />
    <path
      d="M10 17.500h9m9 0M18.500 9v9M60 17.500h10M64.500 9v9M112.500 9v9M113 17.500h9M10 57.500h9M113 57.500h9M18.500 53v10M112.500 53v10M10 99.500h9M18.500 99v10M60 99.500h10M64.500 99v10M112.500 99v10M113 99.500h9"
      stroke="#000"
      strokeDasharray="1 1"
    />
  </svg>
);

const ShadingPanel = () => (
  <div className="flex flex-1 border border-[#919b9c] bg-linear-to-b from-[#fcfcfe] via-[#f6f5f2] to-[#f3f2ec] px-1.5 shadow-[1px_1px_0_#d0cebf]">
    <div className="flex w-[279px] flex-col pt-1.5">
      <div className="flex h-4 items-center gap-1 text-[#0046d5]">
        Fill
        <span className="h-px flex-1 bg-[#d0d0bf]" />
      </div>
      <div className="-mt-[5px] flex items-start pl-1">
        <div className="w-[159px] border-2 border-[#a41414] bg-[#f8f4f3] px-1.5 pb-1.5 pt-[5px] shadow-[3px_3px_4px_#a8a6a4]">
          <button type="button" className="flex h-5 w-[143px] items-center justify-center border border-[#7f9db9] bg-white">
            No Fill
          </button>
          <div className="mt-px grid w-[143px] grid-cols-8 gap-px">
            {swatches.map((color, i) => (
              <button
                key={i}
                type="button"
                aria-label={color}
                className="h-[17px] border border-[#8ea6c0]"
                style={{ backgroundColor: color }}
              />
            ))}
          </div>
        </div>
        <div className="flex flex-col items-center pl-[9px] pt-[75px]">
          <output className="flex h-5 w-[99px] items-center justify-center border border-[#7f9db9] bg-[#f8f8f7]">No Fill</output>
          <button type="button" className={`mt-[57px] w-[96px] ${xpButton}`}>
            <span>
              <Key text="More Colors..." at={1} />
            </span>
          </button>
        </div>
      </div>
      <div className="mt-[6px] flex h-4 items-center gap-[6px] text-[#0046d5]">
        Patterns
        <span className="h-px flex-1 bg-[#d0d0bf]" />
      </div>
      <div className="flex w-[183px] flex-col pl-2.5">
        <label htmlFor="style" className="h-[17px] leading-4">
          <Key text="Style:" at={2} />
        </label>
        <FormSelect id="style" value="Clear" swatch />
        <label htmlFor="color" className="mt-1 h-[15px] leading-4 text-[#aca899]">
          Color:
        </label>
        <FormSelect id="color" value="Automatic" disabled />
      </div>
    </div>
    <div className="my-[5px] ml-[7px] w-px bg-[#a8a89c]" />
    <div className="flex flex-1 flex-col pl-2 pt-1.5">
      <div className="h-4 leading-4">Preview</div>
      <div className="pl-[35px] pt-[47px]">
        <PreviewTable />
      </div>
      <label htmlFor="apply" className="mt-[42px] h-[18px] leading-4">
        <Key text="Apply to:" at={3} />
      </label>
      <FormSelect id="apply" value="Table" />
    </div>
  </div>
);

const BordersDialog = () => (
  <section
    role="dialog"
    aria-label="Borders and Shading"
    className="absolute left-[136px] top-[84px] flex h-[406px] w-[528px] flex-col overflow-hidden rounded-t-lg border-x-3 border-b-3 border-[#0c2fb4] bg-[#ece9d8]"
  >
    <header className="flex h-[29px] shrink-0 items-center bg-linear-to-b from-[#3c8cf8] via-[#0355e4] via-25% to-[#0462fb] pl-[3px] pr-0.5">
      <h2 className="flex-1 pt-0.5 font-['Noto_Sans',sans-serif] text-[12px] font-bold text-white">Borders and Shading</h2>
      <button type="button" aria-label="Close dialog" className="flex h-[21px] w-[21px] items-center justify-center rounded-[3px] border border-white bg-linear-to-br from-[#e98a6c] to-[#cf3c14]">
        <svg width="12" height="12" viewBox="0 0 12 12" stroke="#fff" strokeWidth="2" aria-hidden="true">
          <path d="m1 1 10 10m0-10L1 11" />
        </svg>
      </button>
    </header>
    <div className="flex flex-1 flex-col px-[7px] pb-[7px] pt-[6px]">
      <div role="tablist" className="-mb-px flex items-end pl-px">
        <button type="button" role="tab" className="h-[20px] w-[52px] rounded-t-[3px] border border-[#919b9c] bg-linear-to-b from-white to-[#f0efe6]">
          <Key text="Borders" at={0} />
        </button>
        <button type="button" role="tab" className="ml-px h-[20px] w-[76px] rounded-t-[3px] border border-[#919b9c] bg-linear-to-b from-white to-[#f0efe6]">
          <Key text="Page Border" at={0} />
        </button>
        <button type="button" role="tab" aria-selected="true" className="z-10 h-[22px] w-[58px] rounded-t-[3px] border border-b-0 border-t-3 border-[#919b9c] border-t-[#f2a62c] bg-[#fcfcfe] px-[3px]">
          <span className="flex h-4 items-center justify-center border border-dotted border-black">
            <span>
              <Key text="Shading" at={0} />
            </span>
          </span>
        </button>
      </div>
      <ShadingPanel />
      <div className="mt-[11px] flex gap-[9px] pl-px">
        <button type="button" className={`w-[110px] ${xpButton}`}>
          <span>
            <Key text="Show Toolbar" at={5} />
          </span>
        </button>
        <button type="button" className={`w-[110px] ${xpButton}`}>
          <span>
            <Key text="Horizontal Line..." at={0} />
          </span>
        </button>
        <span className="flex-1" />
        <button type="button" className={`w-[72px] ${xpButton} shadow-[inset_0_0_0_2px_#a9c4f2]`}>
          OK
        </button>
        <button type="button" className={`w-[72px] ${xpButton}`}>
          Cancel
        </button>
      </div>
    </div>
  </section>
);

const Watermark = () => (
  <span className="pointer-events-none absolute left-[304px] top-[374px] origin-bottom-left -rotate-45 font-['Noto_Sans',sans-serif] text-[60px] leading-none font-medium whitespace-pre text-black/30">
    buaxua .vn
  </span>
);

export default function App() {
  return (
    <div className="relative flex h-screen flex-col overflow-hidden bg-linear-to-r from-[#9ebef5] to-[#c6dbfa] font-[Roboto,'Noto_Sans',sans-serif] text-[11px] leading-4 text-black">
      <TitleBar />
      <MenuBar />
      <StandardToolbar />
      <FormatToolbar />
      <Workspace />
      <DrawToolbar />
      <StatusBar />
      <BordersDialog />
      <Watermark />
    </div>
  );
}
